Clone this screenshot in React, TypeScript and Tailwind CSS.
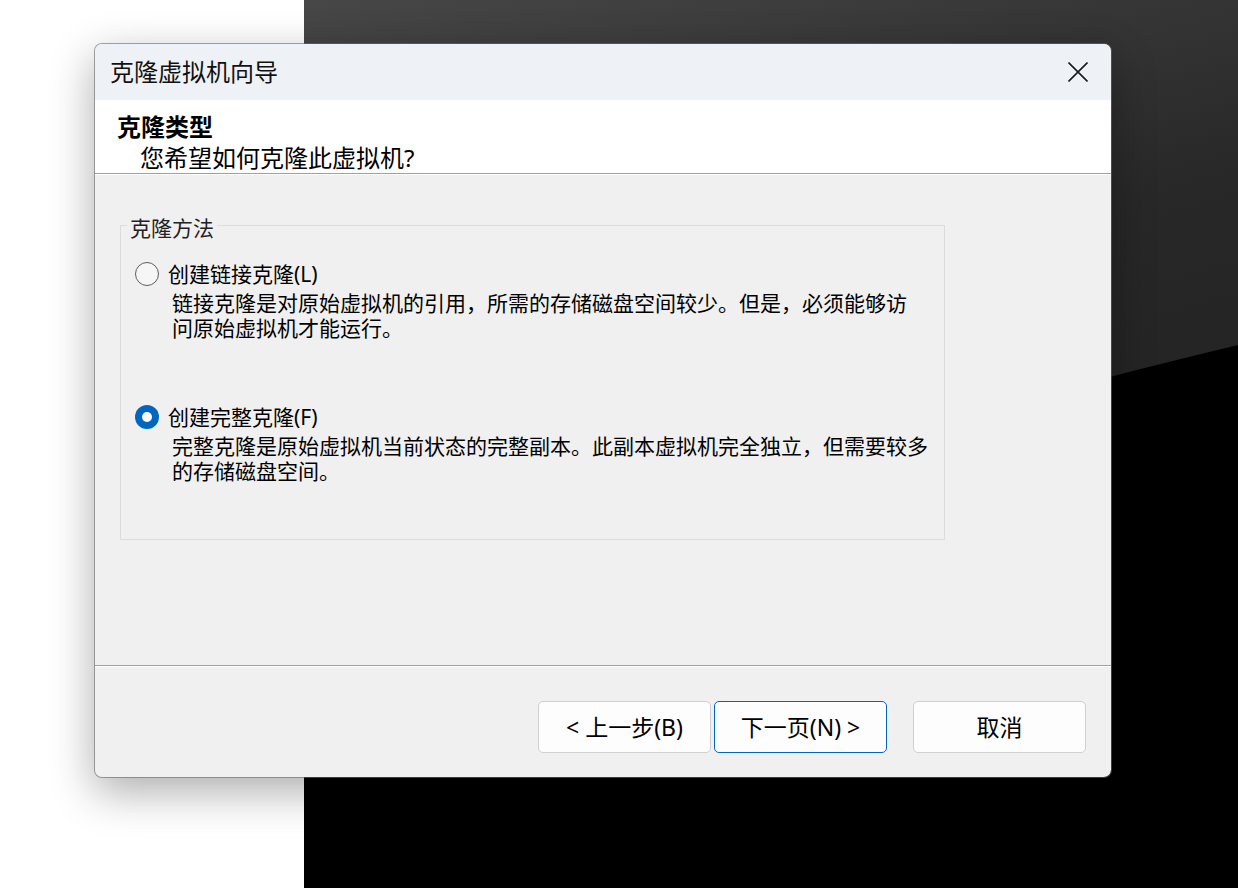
const font = "font-['Noto_Sans','Noto_Sans_CJK_SC',sans-serif]";

function Radio({ checked }: { checked?: boolean }) {
  if (checked) {
    return (
      <span className="flex h-[24px] w-[24px] shrink-0 items-center justify-center rounded-full bg-[#0067c0]">
        <span className="h-[10px] w-[10px] rounded-full bg-white" />
      </span>
    );
  }
  return <span className="h-[24px] w-[24px] shrink-0 rounded-full border-[1.5px] border-[#5d5d5d] bg-[#f6f6f6]" />;
}

function Option({ checked, label, lines }: { checked?: boolean; label: string; lines: string[] }) {
  return (
    <div>
      <div className="flex h-[26px] items-center gap-[9px] pl-[14px]">
        <Radio checked={checked} />
        <span className="text-[21px] leading-[26px] text-black">{label}</span>
      </div>
      <div className="mt-[4px] pl-[51px] text-[21px] leading-[25px] text-black">
        {lines.map(l => (
          <div key={l} className="whitespace-nowrap">{l}</div>
        ))}
      </div>
    </div>
  );
}

function WizardButton({ children, active }: { children: React.ReactNode; active?: boolean }) {
  return (
    <button
      className={
        active
          ? 'h-[52px] w-[173px] rounded-[5px] border border-[#0067c0] bg-[#fdfdfd] text-[23px] text-black'
          : 'h-[52px] w-[173px] rounded-[5px] border border-[#d0d0d0] bg-[#fdfdfd] text-[23px] text-black'
      }
    >
      {children}
    </button>
  );
}

export default function App() {
  return (
    <div className={`relative h-[888px] w-[1238px] overflow-hidden ${font}`}>
      {/* Desktop behind */}
      <div className="flex h-full w-full">
        <div className="h-full w-[304px] bg-white" />
        <div className="h-full flex-1">
          <svg width="934" height="888" viewBox="0 0 934 888" className="block">
            <defs>
              <linearGradient id="dark" x1="0" y1="0" x2="0.3" y2="1">
                <stop offset="0" stopColor="#474747" />
                <stop offset="0.45" stopColor="#282828" />
                <stop offset="1" stopColor="#1e1e1e" />
              </linearGradient>
            </defs>
            <rect width="934" height="888" fill="url(#dark)" />
            <path d="M0,700 C300,520 600,425 934,345 L934,888 L0,888 Z" fill="#000" />
          </svg>
        </div>
      </div>

      {/* Wizard window */}
      <div className="absolute left-[94px] top-[43px] flex h-[735px] w-[1018px] flex-col overflow-hidden rounded-[8px] border border-[rgba(104,104,104,0.6)] bg-[#f0f0f0] bg-clip-padding shadow-[0_14px_44px_rgba(0,0,0,0.32)]">
        {/* Title bar */}
        <div className="flex h-[56px] shrink-0 items-center justify-between bg-[#eef2f6] pl-[15px] pr-[23px]">
          <span className="text-[24px] leading-[30px] text-[#111]">克隆虚拟机向导</span>
          <svg width="20" height="20" viewBox="0 0 20 20" className="text-[#1a1a1a]">
            <path d="M0.5 0.5 L19.5 19.5 M19.5 0.5 L0.5 19.5" stroke="currentColor" strokeWidth="1.6" />
          </svg>
        </div>

        {/* Header */}
        <div className="h-[73px] shrink-0 bg-white pl-[22px] pt-[11px]">
          <div className="text-[24px] font-bold leading-[31px] text-black">克隆类型</div>
          <div className="pl-[23px] text-[24px] leading-[31px] text-black">您希望如何克隆此虚拟机?</div>
        </div>
        <div className="h-px shrink-0 bg-[#a0a0a0]" />
        <div className="h-px shrink-0 bg-white" />

        {/* Body */}
        <div className="h-[490px] shrink-0 pl-[25px] pt-[50px]">
          <div className="relative h-[315px] w-[825px] border border-[#dcdcdc]">
            <span className="absolute left-[6px] top-[-11px] bg-[#f0f0f0] px-[3px] text-[21px] leading-[26px] text-[#222]">
              克隆方法
            </span>
            <div className="pt-[35px]">
              <Option
                label="创建链接克隆(L)"
                lines={['链接克隆是对原始虚拟机的引用，所需的存储磁盘空间较少。但是，必须能够访', '问原始虚拟机才能运行。']}
              />
              <div className="mt-[63px]">
                <Option
                  checked
                  label="创建完整克隆(F)"
                  lines={['完整克隆是原始虚拟机当前状态的完整副本。此副本虚拟机完全独立，但需要较多', '的存储磁盘空间。']}
                />
              </div>
            </div>
          </div>
        </div>

        <div className="h-px shrink-0 bg-[#a0a0a0]" />
        <div className="h-px shrink-0 bg-white" />

        {/* Footer */}
        <div className="flex flex-1 items-start justify-end pr-[25px] pt-[34px]">
          <div className="flex gap-[3px]">
            <WizardButton>&lt; 上一步(B)</WizardButton>
            <WizardButton active>下一页(N) &gt;</WizardButton>
          </div>
          <div className="ml-[26px]">
            <WizardButton>取消</WizardButton>
          </div>
        </div>
      </div>
    </div>
  );
}
